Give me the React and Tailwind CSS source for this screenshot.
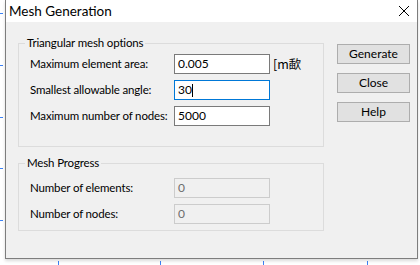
import React from 'react';

const font = { fontFamily: 'Lato, "Noto Sans CJK SC", sans-serif' };

const Field = ({ label, value, focused, disabled, suffix }) => (
    <div className="flex items-center h-[20px]">
        <span className="w-[155px] pl-[11px] text-[11.5px] tracking-[-0.15px] text-black whitespace-nowrap">{label}</span>
        <div
            className={`w-[96px] h-[20px] flex items-center px-[3px] text-[12px] border ${
                disabled
                    ? 'border-[#cccccc] bg-[#f0f0f0] text-[#6d6d6d]'
                    : focused
                    ? 'border-[#0078d7] bg-white text-black'
                    : 'border-[#7a7a7a] bg-white text-black'
            }`}
        >
            {value}
            {focused && <span className="inline-block w-px h-[13px] bg-black" />}
        </div>
        {suffix && (
            <span className="ml-[3px] text-[12.5px] text-black whitespace-nowrap" style={{ fontFamily: '"Noto Sans CJK SC", sans-serif' }}>
                {suffix}
            </span>
        )}
    </div>
);

const Group = ({ title, children, className }) => (
    <fieldset className={`border border-[#dcdcdc] ml-0 ${className}`}>
        <legend className="ml-[6px] px-[2px] text-[11.5px] tracking-[-0.15px] text-black leading-[14px]">{title}</legend>
        {children}
    </fieldset>
);

const Button = ({ children }) => (
    <button className="w-[73px] h-[20px] bg-[#e1e1e1] border border-[#adadad] text-[12px] text-black flex items-center justify-center">
        {children}
    </button>
);

export default function App() {
    const ticksLeft = [13, 65, 117, 168, 220];
    const ticksBottom = [58, 160, 263, 367];

    return (
        <div className="w-[420px] h-[265px] bg-white relative overflow-hidden" style={font}>
            {/* background grid ticks */}
            {ticksLeft.map((y) => (
                <div key={y} className="absolute left-0 w-[3px] h-px bg-[#3b82f6]" style={{ top: y }} />
            ))}
            {ticksBottom.map((x) => (
                <div key={x} className="absolute bottom-0 w-px h-[4px] bg-[#3b82f6]" style={{ left: x }} />
            ))}

            {/* Dialog */}
            <div className="absolute left-[5px] top-0 w-[413px] h-[259px] border-x border-b border-[#7d7d7d] bg-[#f0f0f0] flex flex-col shadow-[0_2px_3px_rgba(0,0,0,0.15)]">
                {/* Title bar */}
                <div className="h-[22px] bg-white flex items-center justify-between pl-[3px] pr-[8px]">
                    <span className="text-[13.5px] text-black">Mesh Generation</span>
                    <svg width="10" height="10" viewBox="0 0 10 10">
                        <path d="M0 0 L10 10 M10 0 L0 10" stroke="#000" strokeWidth="1" />
                    </svg>
                </div>

                {/* Body */}
                <div className="flex pl-[12px] pt-[14px]">
                    <div className="flex flex-col w-[306px]">
                        <Group title="Triangular mesh options" className="h-[111px] pt-[4px] flex flex-col gap-[6px]">
                            <Field label="Maximum element area:" value="0.005" suffix="[m歃" />
                            <Field label="Smallest allowable angle:" value="30" focused />
                            <Field label="Maximum number of nodes:" value="5000" />
                        </Group>
                        <Group title="Mesh Progress" className="mt-[9px] h-[75px] pt-[8px] flex flex-col gap-[6px]">
                            <Field label="Number of elements:" value="0" disabled />
                            <Field label="Number of nodes:" value="0" disabled />
                        </Group>
                    </div>
                    <div className="ml-[13px] pt-[8px] flex flex-col gap-[9px]">
                        <Button>Generate</Button>
                        <Button>Close</Button>
                        <Button>Help</Button>
                    </div>
                </div>
            </div>
        </div>
    );
}
